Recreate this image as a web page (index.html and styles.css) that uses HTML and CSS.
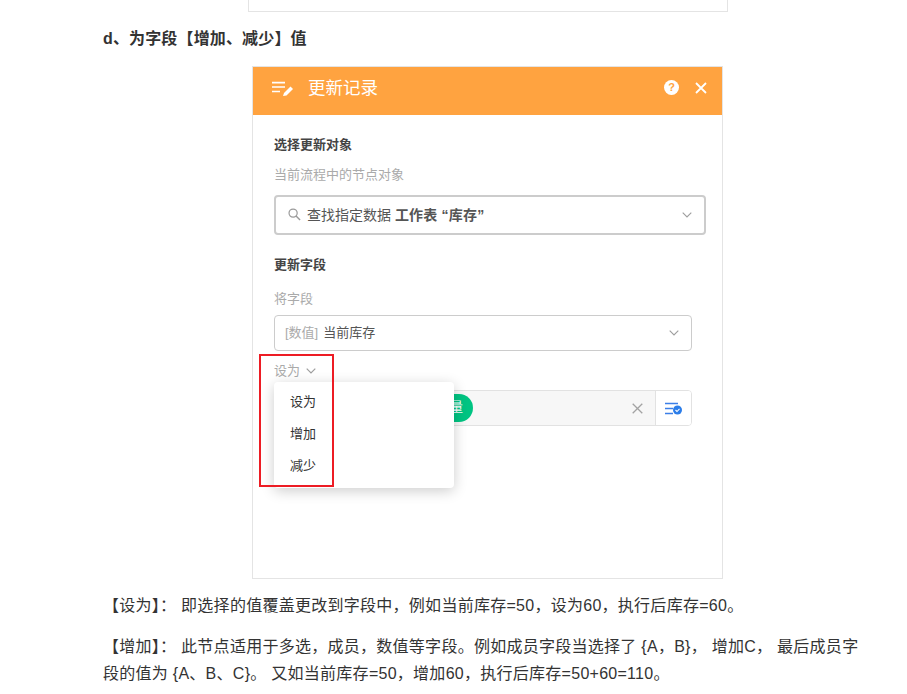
FILE: index.html
```html
<!DOCTYPE html>
<html lang="zh-CN">
<head>
<meta charset="utf-8">
<title>更新记录</title>
<link rel="stylesheet" href="styles.css">
</head>
<body>
<main class="article">
  <div class="prev-frame"></div>
  <h4 class="heading">d、为字段【增加、减少】值</h4>
  <div class="shot">
    <header class="shot-head">
      <svg class="head-icon" width="22" height="18" viewBox="0 0 22 18"><path d="M0 3.6h13M0 8h13M0 12.5h8" stroke="#fff" stroke-width="1.7" fill="none"/><path d="M11 17l1-3 6.5-6.5 2.5 2.5-6.5 6.5z" fill="#fff"/></svg>
      <span class="shot-title">更新记录</span>
      <span class="head-actions">
        <span class="help">?</span>
        <svg width="12" height="12" viewBox="0 0 12 12"><path d="M1 1l10 10M11 1L1 11" stroke="#fff" stroke-width="1.8"/></svg>
      </span>
    </header>
    <div class="shot-body">
      <div class="label-bold first">选择更新对象</div>
      <div class="label-grey sub">当前流程中的节点对象</div>
      <div class="object-box">
        <svg class="search" width="13" height="13" viewBox="0 0 14 14"><circle cx="5.5" cy="5.5" r="4.4" stroke="#9a9a9a" stroke-width="1.3" fill="none"/><path d="M8.7 8.7l4.3 4.3" stroke="#9a9a9a" stroke-width="1.5"/></svg>
        <span class="object-text">查找指定数据 <b class="object-strong">工作表 “库存”</b></span>
        <svg class="chev" width="10" height="6" viewBox="0 0 10 6"><path d="M.7.7L5 5l4.3-4.3" stroke="#9e9e9e" stroke-width="1.1" fill="none"/></svg>
      </div>
      <div class="label-bold second">更新字段</div>
      <div class="label-grey third">将字段</div>
      <div class="field-select">
        <span class="tag">[数值]</span><span class="field-name">当前库存</span>
        <svg class="chev" width="10" height="6" viewBox="0 0 10 6"><path d="M.7.7L5 5l4.3-4.3" stroke="#9e9e9e" stroke-width="1.1" fill="none"/></svg>
      </div>
      <div class="op">设为
        <svg width="10" height="6" viewBox="0 0 10 6"><path d="M.7.7L5 5l4.3-4.3" stroke="#9e9e9e" stroke-width="1.2" fill="none"/></svg>
      </div>
      <div class="value-row">
        <div class="value-main">
          <span class="pill">变量</span>
          <svg class="clear" width="11" height="11" viewBox="0 0 11 11"><path d="M.7.7l9.6 9.6M10.3.7L.7 10.3" stroke="#a3a3a3" stroke-width="1.3"/></svg>
        </div>
        <div class="value-side">
          <svg width="17" height="13" viewBox="0 0 17 13"><path d="M0 1.5h13M0 6.5h8M0 11.5h8" stroke="#3c7fe8" stroke-width="1.3"/><circle cx="12.5" cy="8" r="4.5" fill="#2b7de9"/><path d="M10.5 8l1.5 1.5 2.5-2.7" stroke="#fff" stroke-width="1.1" fill="none"/></svg>
        </div>
      </div>
      <ul class="menu">
        <li>设为</li>
        <li>增加</li>
        <li>减少</li>
      </ul>
      <div class="highlight"></div>
    </div>
  </div>
  <p class="para first-para">【设为】： 即选择的值覆盖更改到字段中，例如当前库存=50，设为60，执行后库存=60。</p>
  <p class="para">【增加】： 此节点适用于多选，成员，数值等字段。例如成员字段当选择了 {A，B}， 增加C， 最后成员字段的值为 {A、B、C}。 又如当前库存=50，增加60，执行后库存=50+60=110。</p>
</main>
</body>
</html>
```
FILE: styles.css
```css
* { box-sizing: border-box; }
html, body { margin: 0; padding: 0; background: #fff; overflow: hidden; }
body {
  height: 694px;
  font-family: "Liberation Sans", "Noto Sans CJK SC", sans-serif;
  color: #333;
}
.article { width: 756px; margin-left: 103px; }
.prev-frame {
  width: 480px;
  height: 12px;
  margin-left: 145px;
  border: 1px solid #e4e4e4;
  border-top: 0;
}
.heading {
  margin: 15px 0 15px;
  font-size: 16px;
  line-height: 24px;
  font-weight: bold;
  letter-spacing: .15px;
  color: #333;
}
.shot {
  width: 471px;
  height: 513px;
  margin-left: 149px;
  border: 1px solid #e4e4e4;
  background: #fff;
}
.shot-head {
  height: 48px;
  background: #ffa340;
  display: flex;
  align-items: center;
  padding: 0 15px 7px 19px;
  color: #fff;
}
.head-icon { margin-right: 14px; }
.shot-title { font-size: 17.5px; line-height: 24px; }
.head-actions { margin-left: auto; display: flex; align-items: center; gap: 16px; }
.help {
  width: 15px; height: 15px; border-radius: 50%;
  background: #fff; color: #ffa340;
  font-size: 11px; font-weight: bold; line-height: 15px; text-align: center;
}
.shot-body { position: relative; padding-left: 21px; height: 464px; }
.label-bold { font-size: 13px; font-weight: bold; line-height: 18px; color: #444; }
.label-grey { font-size: 13px; line-height: 18px; color: #aaa; }
.first { padding-top: 21px; height: 39px; }
.sub { margin-top: 12px; }
.object-box {
  width: 432px; height: 40px; margin-top: 11px;
  border: 2px solid #ccc; border-radius: 4px;
  display: flex; align-items: center; padding: 0 12px 2px 12px;
  font-size: 14px; color: #555;
}
.object-box .chev { margin-top: 2px; }
.search { margin-right: 6px; }
.object-strong { color: #555; font-weight: bold; letter-spacing: .2px; }
.chev { margin-left: auto; }
.second { margin-top: 21px; }
.third { margin-top: 16px; }
.field-select {
  width: 418px; height: 36px; margin-top: 7px;
  border: 1px solid #ccc; border-radius: 4px;
  display: flex; align-items: center; padding: 0 12px 3px 10px;
  font-size: 13px;
}
.field-select .chev { margin-top: 3px; }
.tag { color: #aaa; margin-right: 5px; }
.field-name { color: #555; }
.op {
  margin-top: 11px; height: 18px;
  display: flex; align-items: center; gap: 6px;
  font-size: 13px; line-height: 18px; color: #aaa;
}
.value-row {
  width: 418px; height: 36px; margin-top: 10px;
  border: 1px solid #e2e2e2; border-radius: 4px;
  display: flex; overflow: hidden;
}
.value-main {
  flex: 1; background: #f7f7f7;
  display: flex; align-items: center; padding-right: 12px;
}
.pill {
  margin-left: 134px;
  width: 64px; height: 28px; border-radius: 14px;
  background: #00c482; color: #fff; font-size: 13px;
  line-height: 26px; text-align: right; padding-right: 10px;
}
.clear { margin-left: auto; }
.value-side {
  width: 36px; border-left: 1px solid #e2e2e2; background: #fff;
  display: flex; align-items: center; justify-content: center;
}
.menu {
  position: absolute; left: 21px; top: 267px;
  width: 180px; height: 106px; margin: 0; padding: 4px 0 0;
  list-style: none; background: #fff; border-radius: 4px;
  box-shadow: 0 3px 14px rgba(0, 0, 0, .2);
}
.menu li {
  height: 32px; line-height: 32px; padding-left: 16px;
  font-size: 13px; color: #333;
}
.highlight {
  position: absolute; left: 6px; top: 239px;
  width: 75px; height: 133px;
  border: 2px solid #ed1c24;
}
.para {
  margin: 0 0 14px;
  font-size: 16px;
  line-height: 27px;
  letter-spacing: .27px;
  color: #333;
}
.first-para { margin-top: 13px; }
```
